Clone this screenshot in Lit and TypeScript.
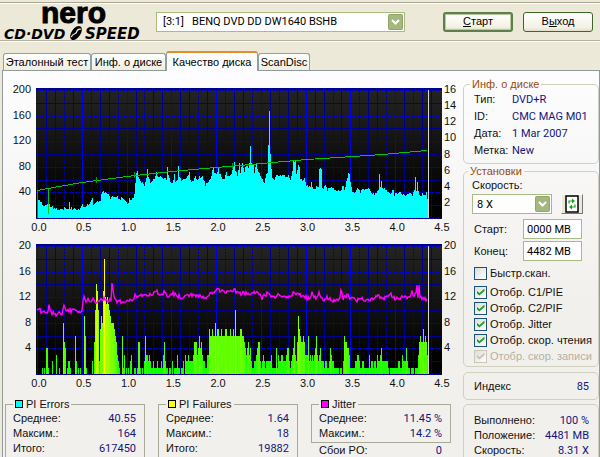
import { LitElement, html, svg, css } from "lit";
import { customElement, property } from "lit/decorators.js";

type Point = [number, number];

// Plot geometry shared by both graphs
const PLOT_W = 406;
const PLOT_H = 131;
const BASE = 130;
const END_X = 392;

// Height of the PI Errors area above the base line
const ERRORS: Point[] = [
  [1, 18], [4, 17], [6, 13], [10, 12], [12, 13], [17, 10], [20, 9], [25, 9], [29, 10], [32, 10],
  [33, 15], [34, 10], [40, 8], [44, 9], [46, 13], [48, 11], [50, 12], [53, 14], [56, 19], [57, 14],
  [60, 15], [62, 17], [64, 18], [65, 25], [68, 26], [71, 25], [74, 20], [78, 22], [80, 21], [83, 19],
  [86, 20], [90, 16], [92, 15], [93, 20], [95, 18], [97, 20], [98, 25], [99, 35], [100, 44], [101, 46],
  [102, 42], [104, 37], [106, 35], [108, 32], [110, 41], [111, 50], [112, 41], [114, 36], [116, 36],
  [118, 40], [120, 46], [122, 40], [124, 42], [127, 38], [128, 41], [130, 38], [131, 50], [132, 43],
  [134, 36], [136, 35], [138, 43], [139, 37], [141, 38], [142, 51], [143, 42], [145, 36], [148, 38],
  [151, 41], [153, 45], [154, 38], [156, 36], [159, 43], [160, 38], [163, 41], [166, 41], [168, 36],
  [169, 32], [171, 35], [173, 38], [175, 43], [177, 51], [178, 44], [180, 43], [182, 51], [183, 45],
  [185, 41], [188, 40], [190, 46], [191, 43], [193, 43], [195, 45], [197, 51], [198, 55], [199, 48],
  [201, 43], [203, 55], [204, 46], [206, 54], [208, 46], [210, 53], [212, 50], [213, 54], [214, 71],
  [215, 54], [217, 53], [218, 46], [220, 54], [222, 46], [224, 43], [226, 38], [228, 36], [230, 43],
  [231, 46], [232, 73], [233, 106], [234, 63], [235, 48], [236, 41], [238, 38], [240, 42], [242, 43],
  [246, 43], [248, 44], [250, 41], [252, 43], [254, 38], [256, 46], [257, 58], [259, 57], [260, 43],
  [262, 53], [263, 50], [264, 40], [266, 37], [268, 41], [269, 35], [271, 32], [274, 31], [275, 35],
  [277, 29], [280, 31], [282, 32], [283, 50], [285, 48], [286, 30], [287, 29], [289, 33], [291, 28],
  [294, 31], [296, 29], [299, 28], [302, 27], [305, 27], [306, 33], [308, 28], [310, 36], [312, 46],
  [313, 44], [314, 35], [316, 27], [319, 26], [322, 30], [324, 26], [326, 30], [328, 27], [332, 31],
  [334, 27], [336, 25], [338, 23], [341, 27], [342, 28], [343, 45], [344, 30], [345, 38], [346, 30],
  [349, 29], [351, 27], [354, 24], [357, 28], [358, 23], [362, 25], [366, 24], [370, 23], [374, 25],
  [376, 23], [378, 27], [379, 42], [380, 28], [381, 37], [382, 27], [384, 22], [386, 25], [388, 23],
  [390, 25], [391, 20],
];

const SPEED: Point[] = [
  [1, 102], [12, 100], [46, 94], [91, 88], [136, 83], [180, 79], [204, 77], [225, 75], [271, 71],
  [317, 68], [347, 66], [391, 62],
];

// PI Failures per column, one base-36 digit each
const FAILURES = [
  "0000001010", "4410002000", "3001000854", "0122100006", "2010100096", "100000205a",
  "eda2798dic", "bcba988876", "5321006130", "1010230011", "0155101026", "3323211211",
  "1211121352", "1101102011", "1311011203", "2232222355", "5346453221", "1337667668",
  "6776676667", "766676676a", "6666776654", "3453421122", "3455212321", "2222231111",
  "4132233222", "3442123463", "2597655653", "3362323234", "6323422212", "2112432211",
  "1110110265", "5443111112", "2332112211", "1113122122", "1322342222", "2210111111",
  "1122113222", "4211011101", "1135655756", "533",
].join("");

const JITTER: Point[] = [
  [1, 67], [3, 64], [5, 68], [7, 69], [10, 67], [12, 68], [13, 59], [14, 66], [16, 69], [19, 70],
  [21, 71], [24, 69], [26, 71], [27, 67], [28, 60], [30, 68], [32, 67], [36, 67], [38, 64], [40, 66],
  [43, 68], [46, 66], [47, 59], [48, 53], [50, 58], [51, 55], [54, 57], [57, 55], [60, 58], [63, 58],
  [66, 55], [68, 54], [71, 57], [75, 56], [76, 38], [78, 54], [81, 57], [86, 58], [91, 58], [96, 55],
  [98, 56], [99, 50], [102, 53], [107, 50], [111, 53], [117, 49], [121, 48], [124, 51], [129, 48],
  [132, 53], [137, 49], [141, 52], [146, 53], [151, 50], [157, 52], [164, 52], [171, 53], [176, 49],
  [180, 45], [184, 47], [189, 49], [194, 48], [197, 47], [198, 43], [200, 48], [204, 50], [207, 48],
  [211, 50], [217, 48], [222, 49], [226, 54], [229, 51], [233, 48], [236, 53], [242, 51], [247, 54],
  [252, 54], [257, 50], [262, 49], [267, 53], [274, 54], [276, 49], [278, 54], [282, 53], [283, 49],
  [287, 56], [291, 54], [299, 57], [304, 54], [305, 45], [307, 54], [311, 51], [314, 54], [321, 56],
  [327, 55], [332, 57], [337, 55], [342, 51], [346, 55], [351, 53], [355, 50], [357, 54], [364, 54],
  [371, 53], [374, 53], [376, 48], [378, 51], [380, 50], [381, 43], [382, 53], [383, 43], [384, 54],
  [387, 55], [391, 56],
];

const interpolate = (pts: Point[], x: number): number => {
  const i = pts.findIndex((p) => p[0] >= x);
  if (i <= 0) return pts[Math.max(i, 0)][1];
  const [x0, y0] = pts[i - 1];
  const [x1, y1] = pts[i];
  return y0 + ((y1 - y0) * (x - x0)) / (x1 - x0);
};

// Repeatable ripple in the range -1..1
const ripple = (x: number): number => {
  const n = Math.sin(x * 127) * 4375;
  return (n - Math.floor(n)) * 2 - 1;
};

const columns = Array.from({ length: END_X - 1 }, (_, i) => i + 1);

@customElement("scan-graph")
export class ScanGraph extends LitElement {
  @property() kind: "errors" | "failures" = "errors";
  @property({ attribute: false }) left: string[] = [];
  @property({ attribute: false }) right: string[] = [];

  static styles = css`
    :host {
      display: grid;
      grid-template-columns: 33px minmax(0, 1fr) 21px;
      font: 11px/14px "Liberation Sans", Arial, sans-serif;
      color: #111;
    }
    .axis {
      display: flex;
      flex-direction: column;
      justify-content: space-between;
      align-self: start;
      margin-top: -6px;
      height: 116px;
    }
    .left { text-align: right; padding-right: 5px; }
    .right { padding-left: 2px; }
    .tall { height: 127px; }
    .plot { display: block; width: 100%; height: 131px; }
    .times {
      grid-column: 1 / -1;
      display: flex;
      justify-content: space-between;
      margin: 1px 11px 0 26px;
    }
    .time { width: 20px; text-align: center; }
    .minor { stroke: #000090; stroke-width: 1; }
    .dots { stroke: #0000a0; stroke-width: 1; stroke-dasharray: 2 1; }
    .major { stroke: #0000f0; stroke-width: 1; }
    .row { stroke: #0000d8; stroke-width: 1; stroke-dasharray: 2 1; }
    .top { stroke: #00008c; stroke-width: 2; }
    .area { fill: #00ffff; }
    .speed { fill: none; stroke: #00c800; stroke-width: 1; }
    .mark { stroke: #00a000; stroke-width: 1; }
    .jitter { fill: none; stroke: #ff00ff; stroke-width: 1.4; shape-rendering: auto; }
    .end { stroke: #d8d8d8; stroke-width: 1; }
  `;

  private grid() {
    const verticals = Array.from({ length: 45 }, (_, i) => {
      const x = Math.round(1 + (i * 403) / 45) + 0.5;
      const cls = i % 5 === 0 ? "major" : i % 3 === 0 ? "dots" : "minor";
      return svg`<line class=${cls} x1=${x} x2=${x} y1="2" y2=${BASE}></line>`;
    });
    const rows = Array.from({ length: 11 }, (_, i) => {
      const y = Math.round(2 + i * 12.8) + 0.5;
      return svg`<line class=${i % 2 ? "minor" : "row"} x1="0" x2=${PLOT_W} y1=${y} y2=${y}></line>`;
    });
    return svg`${verticals}${rows}<line class="top" x1="0" x2=${PLOT_W} y1="1" y2="1"></line>`;
  }

  private errors() {
    const area = columns
      .map((x) => {
        const h = Math.round(interpolate(ERRORS, x) + ripple(x) * 1.4);
        return `M${x} ${BASE}V${BASE - h}h1V${BASE}z`;
      })
      .join("");
    const marks = [60, 98, 196].map((x) => {
      const y = interpolate(SPEED, x);
      return svg`<line class="mark" x1=${x + 0.5} x2=${x + 0.5} y1=${y - 3} y2=${y + 3}></line>`;
    });
    return svg`
      <path class="area" d=${area}></path>
      <polyline class="speed" points=${SPEED.map(([x, y]) => `${x},${y + 0.5}`).join(" ")}></polyline>
      <line class="mark" x1="1.5" x2="1.5" y1="102" y2=${BASE}></line>
      <line class="speed" x1="12.5" x2="12.5" y1="100" y2="126"></line>
      ${marks}`;
  }

  private failures() {
    const bars = [...FAILURES].map((digit, x) => {
      const v = parseInt(digit, 36);
      if (!v) return null;
      const h = Math.round(v * 6.4);
      const red = Math.min(255, 14 * v + (v > 3 ? 10 : 0));
      return svg`<rect x=${x} y=${BASE - h} width="1" height=${h} fill=${`rgb(${red},255,0)`}></rect>`;
    });
    const line = columns
      .map((x) => `${x},${(interpolate(JITTER, x) + ripple(x) * 2).toFixed(1)}`)
      .join(" ");
    return svg`${bars}<polyline class="jitter" points=${line}></polyline>`;
  }

  render() {
    const times = Array.from({ length: 10 }, (_, i) => (i / 2).toFixed(1));
    return html`
      <div class="axis left">${this.left.map((t) => html`<span>${t}</span>`)}</div>
      <svg class="plot" viewBox="0 0 ${PLOT_W} ${PLOT_H}" preserveAspectRatio="none"
        shape-rendering="crispEdges" role="img" aria-label=${this.kind}>
        <defs>
          <linearGradient id="dark" x1="0" y1="0" x2="0" y2="1">
            <stop offset="0" stop-color="#242424"></stop>
            <stop offset="0.85" stop-color="#020202"></stop>
          </linearGradient>
        </defs>
        <rect width=${PLOT_W} height=${PLOT_H} fill="url(#dark)"></rect>
        ${this.grid()}
        ${this.kind === "errors" ? this.errors() : this.failures()}
        <line class="end" x1="392.5" x2="392.5" y1="2" y2=${BASE}></line>
      </svg>
      <div class="axis right ${this.right.length > 5 ? "tall" : ""}">
        ${this.right.map((t) => html`<span>${t}</span>`)}
      </div>
      <div class="times">${times.map((t) => html`<span class="time">${t}</span>`)}</div>
    `;
  }
}

@customElement("app-root")
export class AppRoot extends LitElement {
  static styles = css`
    :host {
      display: flex;
      flex-direction: column;
      height: 100vh;
      overflow: hidden;
      box-sizing: border-box;
      background: #ece9d8;
      color: #111;
      font: 11px/15px "Liberation Sans", Arial, sans-serif;
    }
    * { box-sizing: border-box; }
    button, input, select { font: inherit; color: #000; margin: 0; }
    input, select, .value { font-family: Roboto, "Liberation Sans", sans-serif; }

    .toolbar {
      flex: none;
      display: flex;
      align-items: center;
      margin-top: 2px;
      height: 39px;
      padding-right: 7px;
      border-top: 1px solid #a8a595;
      border-bottom: 1px solid #b5b2a2;
      box-shadow: inset 0 1px #fff, 0 1px #fff;
    }
    .logo { flex: none; width: 152px; height: 36px; margin-right: 4px; overflow: visible; }
    .nero { font: bold 30px "Liberation Sans", Arial, sans-serif; stroke: #000; stroke-width: 1; }
    .product { font: italic bold 14px "DejaVu Sans", sans-serif; }
    .last { font-size: 15px; }

    .picker { position: relative; display: flex; }
    .drive { flex: 1; max-width: 249px; }
    .picker select {
      appearance: none;
      width: 100%;
      height: 20px;
      padding: 0 18px 0 6px;
      border: 1px solid #a5bd84;
      border-radius: 0;
      background: #fff;
    }
    .picker .speed { padding-left: 4px; }
    .arrow {
      position: absolute;
      top: 2px;
      right: 2px;
      width: 15px;
      height: 16px;
      pointer-events: none;
    }
    .actions { display: flex; gap: 10px; margin-left: auto; }
    .action {
      width: 70px;
      height: 20px;
      padding: 0;
      border: 1px solid #39692a;
      border-radius: 3px;
      background: linear-gradient(#fff, #f4f2e4 80%, #e2decb);
    }
    .default { border-width: 2px; border-color: #5d7f4c; box-shadow: inset 0 0 0 1px #b9c9a0; }

    .tabs {
      flex: none;
      display: grid;
      grid-template-columns: 88px 75px 92px 52px;
      align-items: end;
      margin: 10px 0 0 3px;
      height: 19px;
    }
    .tab {
      height: 17px;
      padding: 0;
      border: 1px solid #91a0a0;
      border-bottom: 0;
      border-radius: 3px 3px 0 0;
      background: linear-gradient(#fff, #f0eee0);
      white-space: nowrap;
    }
    .tab.active {
      height: 20px;
      margin-bottom: -1px;
      z-index: 1;
      border-top: 2px solid #e68b2c;
      background: #fdfdfe;
    }

    .page {
      flex: 1;
      display: grid;
      grid-template-columns: minmax(0, 1fr) 136px;
      align-items: start;
      margin-left: 2px;
      border: 1px solid #919b9c;
      border-bottom: 0;
      background: linear-gradient(#fdfdff, #f2f0ec 60%);
      min-height: 386px;
    }
    .graphs { display: flex; flex-direction: column; gap: 10px; padding-top: 17px; }
    .stats {
      display: grid;
      grid-template-columns: repeat(3, minmax(0, 1fr));
      gap: 13px;
      margin: -3px 12px 0 2px;
    }
    fieldset { margin: 0; min-width: 0; padding: 0 8px 1px 7px; border: 1px solid #a9a998; }
    legend { display: flex; align-items: center; gap: 3px; height: 14px; padding: 0 2px; line-height: 14px; }
    .swatch { width: 8px; height: 8px; border: 1px solid #000; }
    .cyan { background: #0ff; }
    .yellow { background: #ff0; }
    .magenta { background: #f0f; }
    .pair { display: flex; justify-content: space-between; height: 15px; white-space: nowrap; }
    .loose { padding: 0 9px 0 8px; }
    .value { color: #15157d; }

    .side { display: flex; flex-direction: column; padding-top: 6px; }
    .side fieldset, .box { border: 1px solid #d0d0bf; border-radius: 5px; padding: 0 9px 4px 10px; }
    .side legend { color: #9c4a0a; margin-left: -4px; }
    .facts { display: grid; grid-template-columns: 38px 1fr; line-height: 17px; margin: 0; }
    .facts dd { margin: 0; white-space: nowrap; }
    .settings { display: flex; flex-direction: column; }
    .side .settings { padding: 0 4px 2px 8px; }
    .caption { height: 16px; }
    .speeds { display: flex; gap: 9px; }
    .speeds .picker { width: 80px; }
    .refresh {
      width: 22px;
      height: 20px;
      padding: 0;
      border: 1px solid #777;
      border-color: #fff #777 #777 #fff;
      background: #ece9d8;
      display: grid;
      place-items: center;
    }
    .range { display: grid; grid-template-columns: 51px 59px; gap: 2px 0; align-items: center; margin: 5px 0 4px; }
    .range label { padding-left: 2px; }
    .range input { width: 100%; height: 20px; padding: 0 3px; border: 1px solid #a5bd84; background: #fff; }
    .check { display: flex; align-items: center; gap: 3px; height: 16px; padding-left: 2px; white-space: nowrap; }
    .quick { margin-bottom: 3px; }
    .check input {
      appearance: none;
      flex: none;
      width: 13px;
      height: 13px;
      border: 1px solid #1c5180;
      background: linear-gradient(135deg, #dcdcd7, #fff);
      display: grid;
      place-items: center;
    }
    .check input:checked::before {
      content: "";
      width: 8px;
      height: 7px;
      background: #21a121;
      clip-path: polygon(0 30%, 36% 66%, 100% 0, 100% 36%, 36% 100%, 0 66%);
    }
    .check input:disabled { border-color: #cac8bb; }
    .check input:disabled::before { background: #c5c3b4; }
    .off { color: #b2b0a2; }
    .box { margin-top: 4px; }
    .index { margin-top: 5px; padding-top: 6px; padding-bottom: 5px; }
    .status { padding-top: 8px; padding-bottom: 8px; }
  `;

  private arrow() {
    return html`<svg class="arrow" viewBox="0 0 15 16" aria-hidden="true">
      <rect x="0.5" y="0.5" width="14" height="15" rx="1" fill="#a3b77f" stroke="#8fa76b"></rect>
      <path d="M4 6l3.500 3.500L11 6" fill="none" stroke="#fff" stroke-width="2"></path>
    </svg>`;
  }

  private pairs(rows: [string, string][]) {
    return rows.map(
      ([name, value]) =>
        html`<div class="pair"><span>${name}</span><span class="value">${value}</span></div>`,
    );
  }

  private check(label: string, checked: boolean, cls = "") {
    return html`<label class="check ${cls}">
      <input type="checkbox" .checked=${checked} ?disabled=${cls === "off"} />${label}
    </label>`;
  }

  render() {
    return html`
      <header class="toolbar">
        <svg class="logo" viewBox="0 0 152 36" role="img" aria-label="Nero CD-DVD Speed">
          <text class="nero" x="41" y="19">nero</text>
          <text class="product" x="4" y="35">CD·DVD</text>
          <text class="product last" x="85" y="35">SPEED</text>
          <g transform="translate(76 29) rotate(35)">
            <ellipse rx="4.500" ry="8" fill="#000"></ellipse>
            <path d="M-1.500 6C-3 2 1 1 0-1S0-5 2-6" fill="none" stroke="#ece9d8" stroke-width="1.200"></path>
          </g>
        </svg>
        <div class="picker drive">
          <select aria-label="Привод">
            <option>[3:1]&nbsp;&nbsp; BENQ DVD DD DW1640 BSHB</option>
          </select>
          ${this.arrow()}
        </div>
        <div class="actions">
          <button class="action default"><u>С</u>тарт</button>
          <button class="action">В<u>ы</u>ход</button>
        </div>
      </header>

      <nav class="tabs" role="tablist">
        <button class="tab" role="tab">Эталонный тест</button>
        <button class="tab" role="tab">Инф. о диске</button>
        <button class="tab active" role="tab" aria-selected="true">Качество диска</button>
        <button class="tab" role="tab">ScanDisc</button>
      </nav>

      <main class="page">
        <section class="graphs">
          <scan-graph kind="errors"
            .left=${["200", "160", "120", "80", "40"]}
            .right=${["16", "14", "12", "10", "8", "6", "4", "2"]}></scan-graph>
          <scan-graph kind="failures"
            .left=${["20", "16", "12", "8", "4"]}
            .right=${["20", "16", "12", "8", "4"]}></scan-graph>
          <div class="stats">
            <fieldset>
              <legend><span class="swatch cyan"></span>PI Errors</legend>
              ${this.pairs([["Среднее:", "40.55"], ["Максим.:", "164"], ["Итого:", "617450"]])}
            </fieldset>
            <fieldset>
              <legend><span class="swatch yellow"></span>PI Failures</legend>
              ${this.pairs([["Среднее:", "1.64"], ["Максим.:", "18"], ["Итого:", "19882"]])}
            </fieldset>
            <div>
              <fieldset>
                <legend><span class="swatch magenta"></span>Jitter</legend>
                ${this.pairs([["Среднее:", "11.45 %"], ["Максим.:", "14.2 %"]])}
              </fieldset>
              <div class="loose">${this.pairs([["Сбои PO:", "0"]])}</div>
            </div>
          </div>
        </section>

        <aside class="side">
          <fieldset>
            <legend>Инф. о диске</legend>
            <dl class="facts">
              <dt>Тип:</dt><dd class="value">DVD+R</dd>
              <dt>ID:</dt><dd class="value">CMC MAG M01</dd>
              <dt>Дата:</dt><dd class="value">1 Mar 2007</dd>
              <dt>Метка:</dt><dd class="value">New</dd>
            </dl>
          </fieldset>
          <fieldset class="settings">
            <legend>Установки</legend>
            <label class="caption" for="speed">Скорость:</label>
            <div class="speeds">
              <div class="picker">
                <select id="speed" class="speed"><option>8 X</option></select>
                ${this.arrow()}
              </div>
              <button class="refresh" aria-label="Обновить">
                <svg width="14" height="18" viewBox="0 0 14 18">
                  <rect x="1" y="1" width="12" height="16" fill="#fff" stroke="#000" stroke-width="1.500"></rect>
                  <path d="M4 8.500V6h3M10 9.500V12H7" fill="none" stroke="#18a018" stroke-width="1.200"></path>
                  <path d="M7 3.500l3 2.500-3 2.500zM7 9.500l-3 2.500 3 2.500z" fill="#18a018"></path>
                </svg>
              </button>
            </div>
            <div class="range">
              <label for="from">Старт:</label><input id="from" value="0000 MB" />
              <label for="to">Конец:</label><input id="to" value="4482 MB" />
            </div>
            ${this.check("Быстр.скан.", false, "quick")}
            ${this.check("Отобр. C1/PIE", true)}
            ${this.check("Отобр. C2/PIF", true)}
            ${this.check("Отобр. Jitter", true)}
            ${this.check("Отобр. скор. чтения", true)}
            ${this.check("Отобр. скор. записи", true, "off")}
          </fieldset>
          <div class="box index">${this.pairs([["Индекс", "85"]])}</div>
          <div class="box status">
            ${this.pairs([["Выполнено:", "100 %"], ["Положение:", "4481 MB"], ["Скорость:", "8.31 X"]])}
          </div>
        </aside>
      </main>
    `;
  }
}
